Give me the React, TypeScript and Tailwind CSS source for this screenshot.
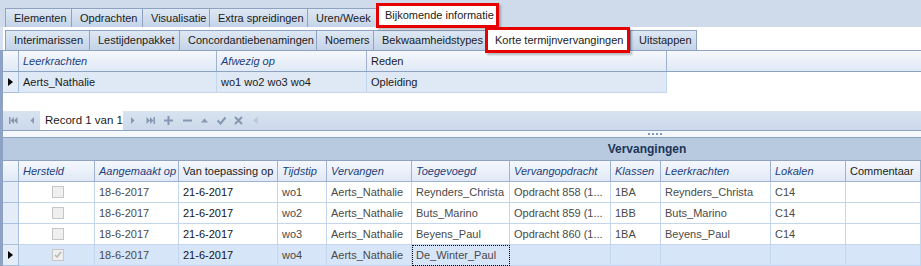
import type { ReactNode } from "react";

const font = "font-[family-name:'Liberation_Sans',Arial,sans-serif]";

const topTabs = [
  { label: "Elementen", w: 67 },
  { label: "Opdrachten", w: 72 },
  { label: "Visualisatie", w: 68 },
  { label: "Extra spreidingen", w: 99 },
  { label: "Uren/Week", w: 70 },
];

const subTabs = [
  { label: "Interimarissen", w: 85 },
  { label: "Lestijdenpakket", w: 91 },
  { label: "Concordantiebenamingen", w: 138 },
  { label: "Noemers", w: 58 },
  { label: "Bekwaamheidstypes", w: 113 },
];

const cols = [
  { key: "hersteld", label: "Hersteld", w: 76, italic: true },
  { key: "aangemaakt", label: "Aangemaakt op", w: 84, italic: true },
  { key: "toepassing", label: "Van toepassing op", w: 99, italic: false },
  { key: "tijdstip", label: "Tijdstip", w: 49, italic: true },
  { key: "vervangen", label: "Vervangen", w: 85, italic: true },
  { key: "toegevoegd", label: "Toegevoegd", w: 98, italic: true },
  { key: "opdracht", label: "Vervangopdracht", w: 101, italic: true },
  { key: "klassen", label: "Klassen", w: 50, italic: true },
  { key: "leerkrachten", label: "Leerkrachten", w: 110, italic: true },
  { key: "lokalen", label: "Lokalen", w: 75, italic: true },
  { key: "commentaar", label: "Commentaar", w: 75, italic: false },
];

const rows = [
  { checked: false, aangemaakt: "18-6-2017", toepassing: "21-6-2017", tijdstip: "wo1", vervangen: "Aerts_Nathalie", toegevoegd: "Reynders_Christa", opdracht: "Opdracht 858 (1...", klassen: "1BA", leerkrachten: "Reynders_Christa", lokalen: "C14" },
  { checked: false, aangemaakt: "18-6-2017", toepassing: "21-6-2017", tijdstip: "wo2", vervangen: "Aerts_Nathalie", toegevoegd: "Buts_Marino", opdracht: "Opdracht 859 (1...", klassen: "1BB", leerkrachten: "Buts_Marino", lokalen: "C14" },
  { checked: false, aangemaakt: "18-6-2017", toepassing: "21-6-2017", tijdstip: "wo3", vervangen: "Aerts_Nathalie", toegevoegd: "Beyens_Paul", opdracht: "Opdracht 860 (1...", klassen: "1BA", leerkrachten: "Beyens_Paul", lokalen: "C14" },
  { checked: true, aangemaakt: "18-6-2017", toepassing: "21-6-2017", tijdstip: "wo4", vervangen: "Aerts_Nathalie", toegevoegd: "De_Winter_Paul", opdracht: "", klassen: "", leerkrachten: "", lokalen: "" },
];

function Tab({ label, w, h }: { label: string; w: number; h: string }) {
  return (
    <div
      style={{ width: w }}
      className={`${h} -mr-px shrink-0 flex items-center pl-[8px] whitespace-nowrap border border-b-0 border-[#8ea3c2] bg-gradient-to-b from-[#dfe8f4] to-[#c3d3e8] text-[#1b1b1b]`}
    >
      {label}
    </div>
  );
}

function RowMarker() {
  return (
    <svg width="5" height="8" viewBox="0 0 5 8">
      <path d="M0 0 L5 4 L0 8 Z" fill="#000" />
    </svg>
  );
}

function NavIcon({ children, className = "" }: { children: ReactNode; className?: string }) {
  return (
    <svg width="11" height="11" viewBox="0 0 11 11" className={`shrink-0 ${className}`}>
      {children}
    </svg>
  );
}

function CheckBox({ checked }: { checked: boolean }) {
  return (
    <div className="w-[12px] h-[12px] -ml-[2px] border border-[#c6c6c6] bg-[#efefef] flex items-center justify-center">
      {checked && (
        <svg width="8" height="8" viewBox="0 0 8 8">
          <path d="M1 4 L3 6 L7 1" stroke="#b5b5b5" strokeWidth="1.5" fill="none" />
        </svg>
      )}
    </div>
  );
}

export default function App() {
  const hdrCell = "h-full shrink-0 flex items-center pl-1 whitespace-nowrap overflow-hidden border-r border-[#9fb3d1]";
  return (
    <div className={`w-[921px] h-[266px] overflow-hidden bg-[#cfdbeb] text-[11px] ${font}`}>
      {/* main tabs */}
      <div className="h-[27px] flex items-end pl-[5px]">
        {topTabs.map((t) => (
          <Tab key={t.label} label={t.label} w={t.w} h="h-[19px]" />
        ))}
        <div className="relative z-10 w-[123px] h-[25px] -mb-px shrink-0 flex items-center pl-[6px] whitespace-nowrap bg-white border-[3px] border-[#e60000] shadow-[2px_2px_2px_rgba(0,0,0,0.25)] text-[#1b1b1b]">
          Bijkomende informatie
        </div>
      </div>

      <div className="flex">
        <div className="w-[3px] shrink-0 flex flex-col">
          <div className="h-[23px] bg-[#d6e0ee]" />
          <div className="flex-1 bg-[#8ea3c3]" />
        </div>

        <div className="w-[918px] flex flex-col">
          {/* sub tabs */}
          <div className="h-[23px] bg-white flex items-end pl-[2px]">
            {subTabs.map((t) => (
              <Tab key={t.label} label={t.label} w={t.w} h="h-[20px]" />
            ))}
            <div className="relative z-10 w-[145px] h-[26px] -mb-[3px] shrink-0 flex items-center pl-[7px] whitespace-nowrap bg-white border-[3px] border-[#e60000] shadow-[2px_2px_2px_rgba(0,0,0,0.25)] text-[#1b1b1b]">
              Korte termijnvervangingen
            </div>
            <Tab label="Uitstappen" w={67} h="h-[20px]" />
          </div>

          {/* upper grid */}
          <div className="h-[22px] flex border-y border-[#8ea3c2] bg-gradient-to-b from-[#f5f8fd] to-[#e0e9f6]">
            <div className={`${hdrCell} w-[16px]`} />
            <div className={`${hdrCell} w-[198px] italic text-[#1c3f7e]`}>Leerkrachten</div>
            <div className={`${hdrCell} w-[150px] italic text-[#1c3f7e]`}>Afwezig op</div>
            <div className={`${hdrCell} w-[300px] text-[#1b1b1b]`}>Reden</div>
          </div>
          <div className="h-[21px] flex bg-white">
            <div className="w-[16px] h-full shrink-0 flex items-center justify-center bg-[#e4ecf7] border-r border-b border-[#a9bfdd]">
              <RowMarker />
            </div>
            <div className="w-[198px] h-full shrink-0 flex items-center pl-1 bg-[#dfe8f5] border-r border-b border-[#c3d6ee] text-[#1b1b1b]">Aerts_Nathalie</div>
            <div className="w-[150px] h-full shrink-0 flex items-center pl-1 bg-[#dfe8f5] border-r border-b border-[#c3d6ee] text-[#1b1b1b]">wo1 wo2 wo3 wo4</div>
            <div className="w-[300px] h-full shrink-0 flex items-center pl-1 bg-[#dfe8f5] border-r border-b border-[#c3d6ee] text-[#1b1b1b]">Opleiding</div>
          </div>
          <div className="h-[18px] bg-white" />

          {/* navigator */}
          <div className="h-[19px] flex items-center bg-gradient-to-b from-[#d8e3f0] to-[#ccd9ea] text-[#8597b1]">
            <div className="w-[37px] flex items-center gap-[8px] pl-[5px]">
              <NavIcon>
                <rect x="1" y="2" width="1.5" height="7" fill="currentColor" />
                <path d="M6 2 L2.5 5.5 L6 9 Z M9.5 2 L6 5.5 L9.5 9 Z" fill="currentColor" />
              </NavIcon>
              <NavIcon>
                <path d="M7 2 L3.5 5.5 L7 9 Z" fill="currentColor" />
              </NavIcon>
            </div>
            <div className="w-[83px] h-full bg-white flex items-center pl-[5px] whitespace-nowrap text-[#1b1b1b] text-[11.5px]">Record 1 van 1</div>
            <div className="flex items-center gap-[6px] pl-[4px]">
              <NavIcon>
                <path d="M4 2 L7.5 5.5 L4 9 Z" fill="currentColor" />
              </NavIcon>
              <NavIcon className="ml-[1px]">
                <path d="M1.5 2 L5 5.5 L1.5 9 Z M5 2 L8.5 5.5 L5 9 Z" fill="currentColor" />
                <rect x="8.5" y="2" width="1.5" height="7" fill="currentColor" />
              </NavIcon>
              <NavIcon className="ml-[1px]">
                <rect x="1" y="4.5" width="9" height="2" fill="currentColor" />
                <rect x="4.5" y="1" width="2" height="9" fill="currentColor" />
              </NavIcon>
              <NavIcon className="ml-[2px]">
                <rect x="1" y="4.5" width="9" height="2" fill="currentColor" />
              </NavIcon>
              <NavIcon>
                <path d="M2 7.5 L5.5 3.5 L9 7.5 Z" fill="currentColor" />
              </NavIcon>
              <NavIcon>
                <path d="M1.5 5.5 L4.5 8.5 L9.5 2.5" stroke="currentColor" strokeWidth="2" fill="none" />
              </NavIcon>
              <NavIcon>
                <path d="M2 2 L9 9 M9 2 L2 9" stroke="currentColor" strokeWidth="2" fill="none" />
              </NavIcon>
              <NavIcon>
                <path d="M7.5 2 L3.5 5.5 L7.5 9 Z" fill="#b8c5d6" />
              </NavIcon>
            </div>
          </div>

          {/* splitter */}
          <div className="h-[8px] border-y border-[#8ea3c2] bg-[#f4f7fb] flex items-center pl-[645px] gap-[2px]">
            <div className="w-[2px] h-[2px] bg-[#7f96b8]" />
            <div className="w-[2px] h-[2px] bg-[#7f96b8]" />
            <div className="w-[2px] h-[2px] bg-[#7f96b8]" />
            <div className="w-[2px] h-[2px] bg-[#7f96b8]" />
          </div>

          {/* lower grid */}
          <div className="h-[23px] flex items-center justify-center pl-[370px] bg-[#b8cae0] border-b border-[#8ea3c2] font-bold text-[12px] text-[#1d3557]">
            Vervangingen
          </div>
          <div className="h-[21px] flex border-b border-[#9fb3d1] bg-gradient-to-b from-[#f5f8fd] to-[#e0e9f6]">
            <div className={`${hdrCell} w-[16px]`} />
            {cols.map((c) => (
              <div
                key={c.key}
                style={{ width: c.w }}
                className={`${hdrCell} ${c.italic ? "italic text-[#1c3f7e]" : "text-[#1b1b1b]"}`}
              >
                {c.label}
              </div>
            ))}
          </div>
          {rows.map((r, i) => {
            const sel = i === rows.length - 1;
            return (
              <div key={i} className={`h-[21px] flex ${sel ? "bg-[#d7e5f8]" : "bg-white"}`}>
                <div className="w-[16px] h-full shrink-0 flex items-center justify-center bg-[#e4ecf7] border-r border-b border-[#a9bfdd]">
                  {sel && <RowMarker />}
                </div>
                {cols.map((c) => {
                  const base = "h-full shrink-0 flex items-center pl-1 border-r border-b border-[#c3d6ee] whitespace-nowrap overflow-hidden";
                  if (c.key === "hersteld") {
                    return (
                      <div key={c.key} style={{ width: c.w }} className={`${base} justify-center pl-0`}>
                        <CheckBox checked={r.checked} />
                      </div>
                    );
                  }
                  const value = c.key === "commentaar" ? "" : r[c.key as keyof typeof r];
                  const focus = sel && c.key === "toegevoegd";
                  return (
                    <div
                      key={c.key}
                      style={{ width: c.w }}
                      className={`${base} ${c.key === "toepassing" ? "text-[#141414]" : "text-[#4a4a4a]"} ${
                        focus ? "outline outline-1 outline-dotted outline-black -outline-offset-1" : ""
                      }`}
                    >
                      {value}
                    </div>
                  );
                })}
              </div>
            );
          })}
        </div>
      </div>
    </div>
  );
}
